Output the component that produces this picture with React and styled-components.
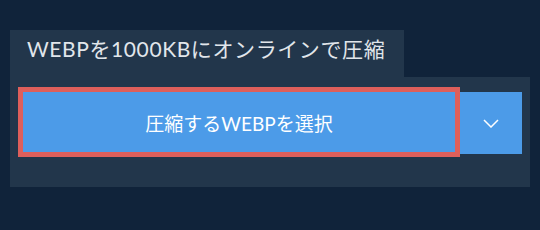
import styled, { createGlobalStyle } from "styled-components";

const GlobalStyle = createGlobalStyle`
  body {
    margin: 0;
    background: #10233a;
    font-family: Lato, "Noto Sans CJK JP", sans-serif;
  }
`;

const Wrapper = styled.div`
  padding: 30px 10px 0 10px;
  width: 520px;
`;

const Tab = styled.div`
  width: 394px;
  height: 47px;
  box-sizing: border-box;
  padding: 0 0 0 17px;
  background: #22364b;
  color: #e1e6eb;
  font-size: 21px;
  letter-spacing: 0.6px;
  line-height: 38px;
  white-space: nowrap;
`;

const Panel = styled.div`
  height: 110px;
  box-sizing: border-box;
  padding: 15px 8px 0 13px;
  background: #22364b;
`;

const Row = styled.div`
  display: flex;
  align-items: flex-start;
`;

const MainButton = styled.button`
  width: 432px;
  height: 60px;
  border: none;
  outline: 5px solid #de5f5b;
  background: #4c9be8;
  color: #fff;
  font-family: inherit;
  font-size: 19px;
  padding: 0;
  cursor: pointer;
`;

const DropButton = styled.button`
  width: 62px;
  height: 62px;
  margin-left: 5px;
  border: none;
  background: #4c9be8;
  display: flex;
  align-items: center;
  justify-content: center;
  padding: 0;
  cursor: pointer;
`;

export default function App() {
  return (
    <>
      <GlobalStyle />
      <Wrapper>
        <Tab>WEBPを1000KBにオンラインで圧縮</Tab>
        <Panel>
          <Row>
            <MainButton>圧縮するWEBPを選択</MainButton>
            <DropButton aria-label="more">
              <svg width="16" height="9" viewBox="0 0 16 9">
                <path d="M1 1l7 7 7-7" fill="none" stroke="#fff" strokeWidth="1.5" />
              </svg>
            </DropButton>
          </Row>
        </Panel>
      </Wrapper>
    </>
  );
}
